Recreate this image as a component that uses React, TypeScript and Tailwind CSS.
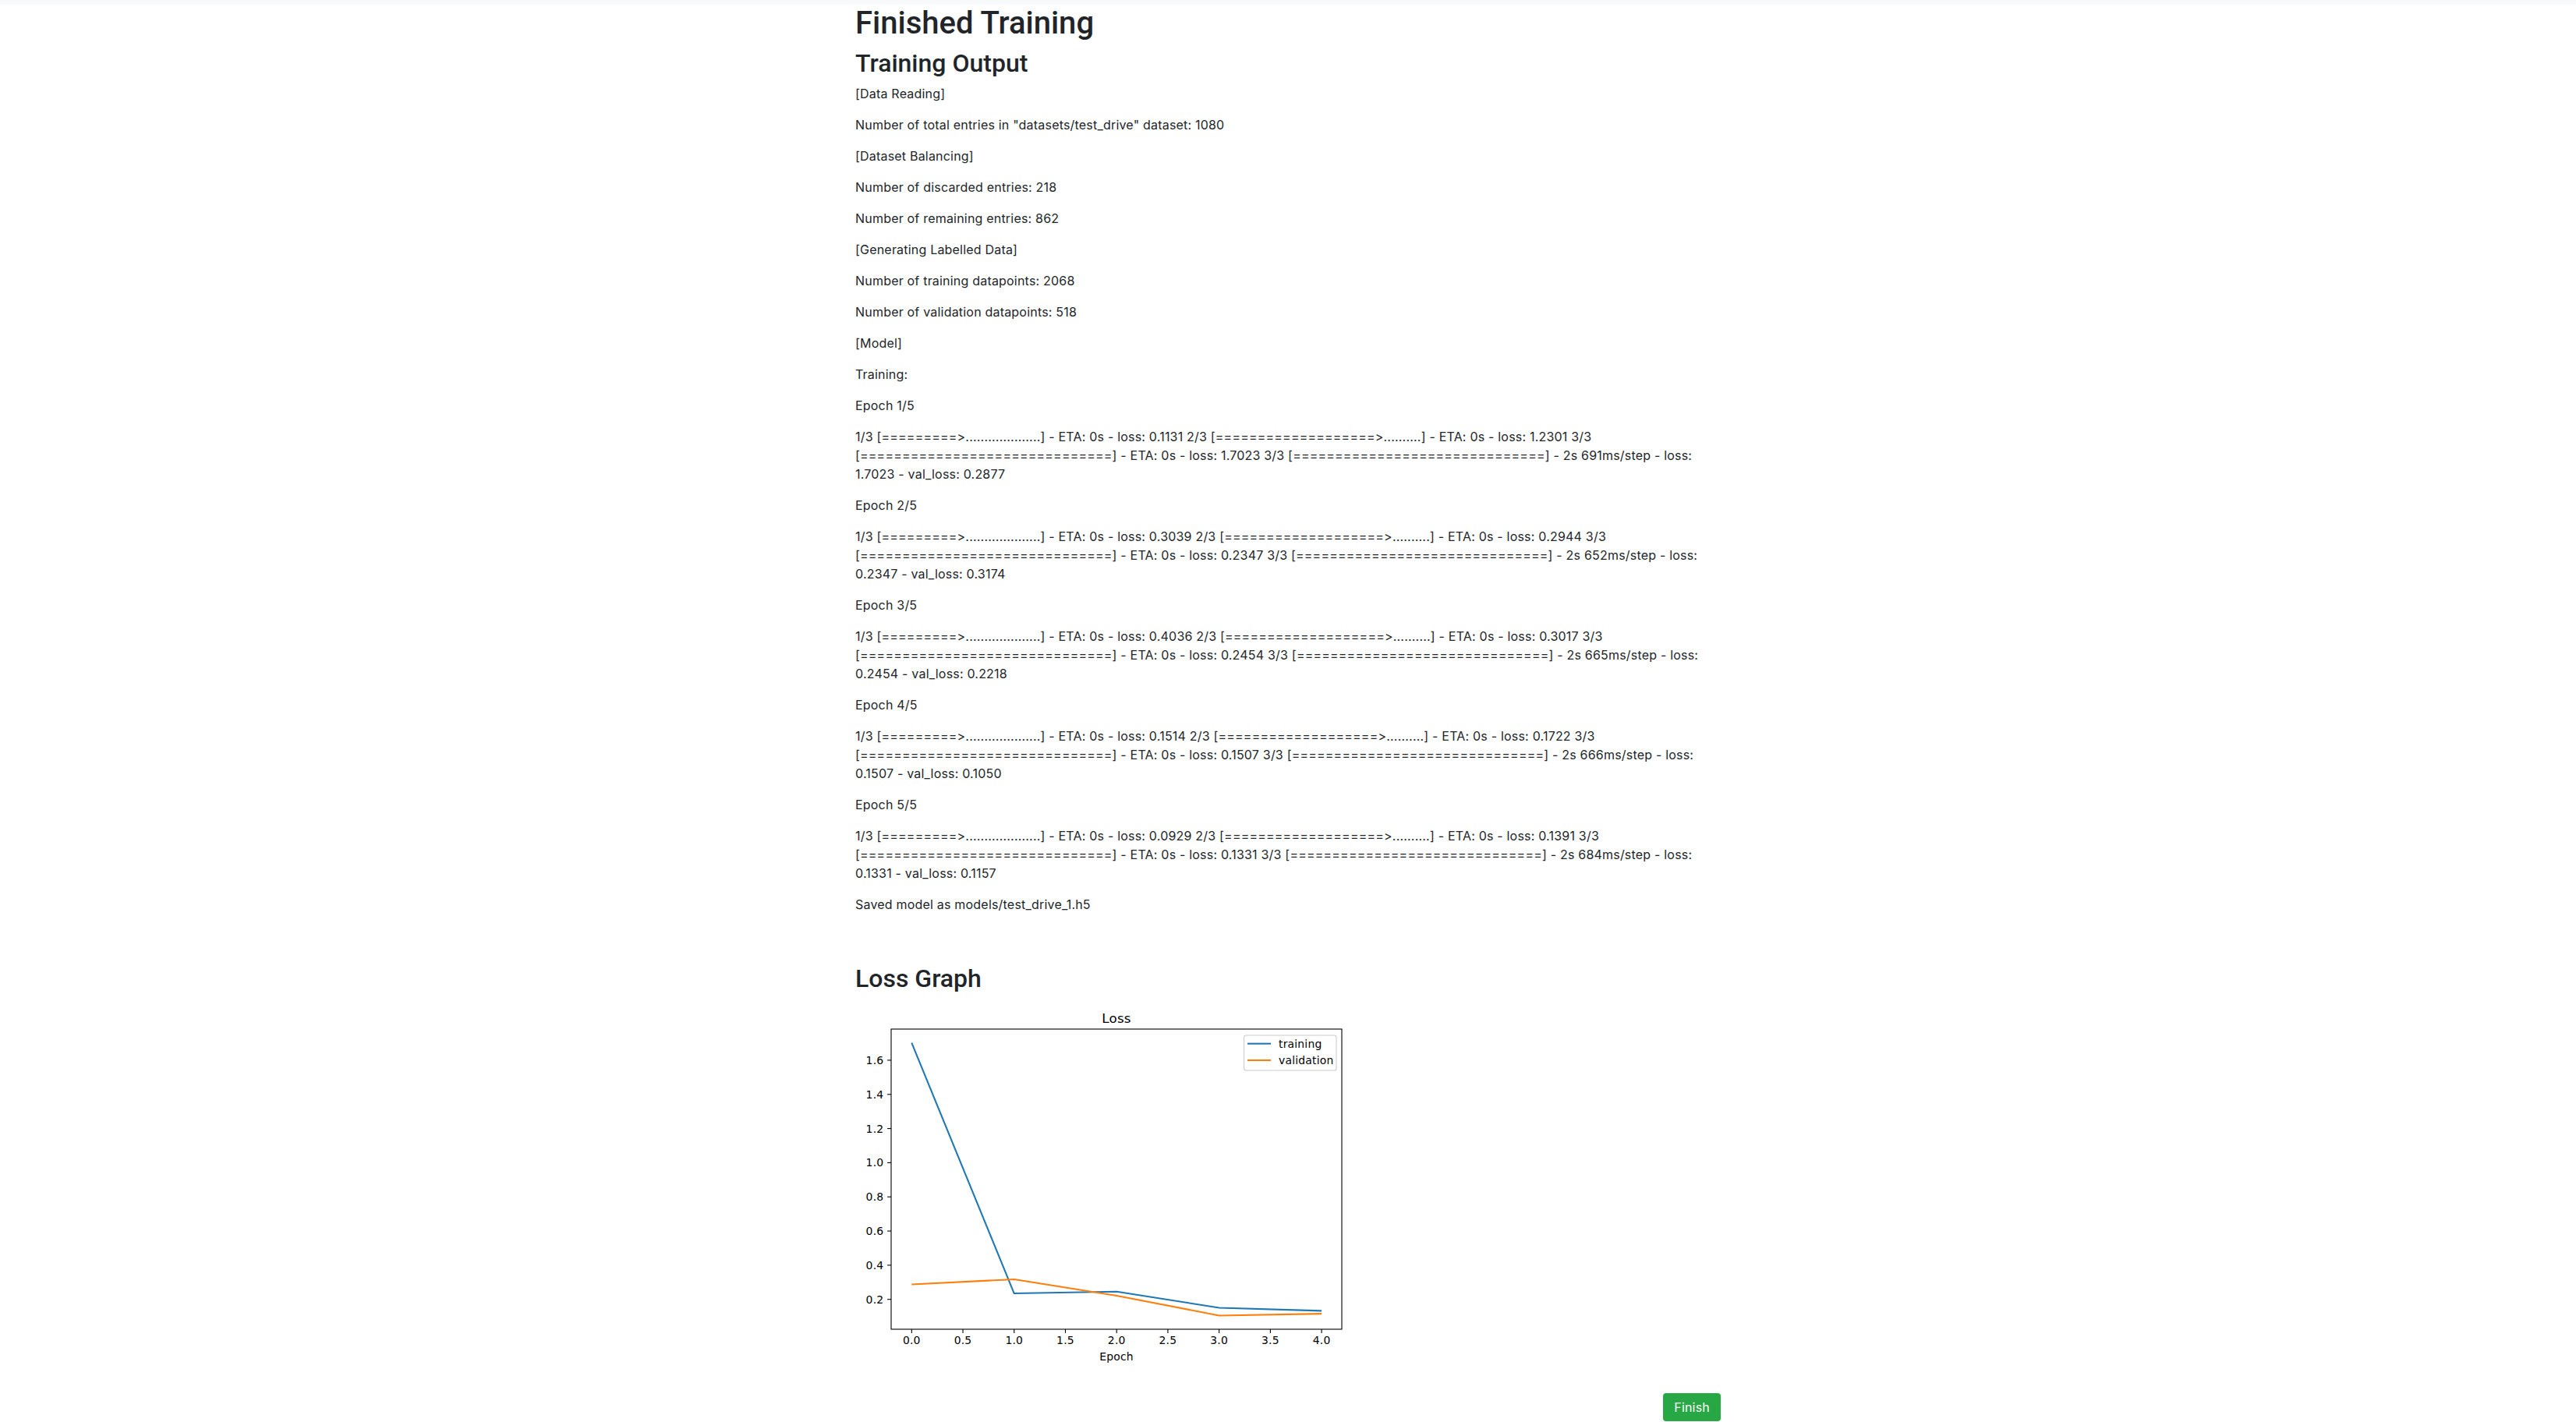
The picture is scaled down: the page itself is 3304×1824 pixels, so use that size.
const body = { fontFamily: 'Inter, "Liberation Sans", Arial, sans-serif' };
const head = { fontFamily: 'Roboto, "Liberation Sans", Arial, sans-serif' };

const half = "[=========>....................]";
const twoThirds = "[===================>..........]";
const full = "[==============================]";

type Epoch = { l1: string; l2: string; l3: string; ms: string; loss: string; val: string };

const epochs: Epoch[] = [
  { l1: "0.1131", l2: "1.2301", l3: "1.7023", ms: "691", loss: "1.7023", val: "0.2877" },
  { l1: "0.3039", l2: "0.2944", l3: "0.2347", ms: "652", loss: "0.2347", val: "0.3174" },
  { l1: "0.4036", l2: "0.3017", l3: "0.2454", ms: "665", loss: "0.2454", val: "0.2218" },
  { l1: "0.1514", l2: "0.1722", l3: "0.1507", ms: "666", loss: "0.1507", val: "0.1050" },
  { l1: "0.0929", l2: "0.1391", l3: "0.1331", ms: "684", loss: "0.1331", val: "0.1157" },
];

const intro = [
  "[Data Reading]",
  'Number of total entries in "datasets/test_drive" dataset: 1080',
  "[Dataset Balancing]",
  "Number of discarded entries: 218",
  "Number of remaining entries: 862",
  "[Generating Labelled Data]",
  "Number of training datapoints: 2068",
  "Number of validation datapoints: 518",
  "[Model]",
  "Training:",
];

// chart geometry (svg px)
const ax = { l: 46, r: 624, t: 37, b: 422 };
const ex = (e: number) => 72.3 + e * 131.45;
const vy = (v: number) => ax.b - (v - 0.02513) * 219.1;
const training = [1.7023, 0.2347, 0.2454, 0.1507, 0.1331];
const validation = [0.2877, 0.3174, 0.2218, 0.105, 0.1157];
const pts = (d: number[]) => d.map((v, i) => `${ex(i)},${vy(v)}`).join(" ");

function LossChart() {
  const yt = [0.2, 0.4, 0.6, 0.8, 1.0, 1.2, 1.4, 1.6];
  const xt = [0, 0.5, 1, 1.5, 2, 2.5, 3, 3.5, 4];
  return (
    <svg width="640" height="480" className="block" style={{ fontFamily: '"DejaVu Sans", sans-serif' }}>
      <text x={(ax.l + ax.r) / 2} y="28.7" textAnchor="middle" fontSize="16.7" fill="#000">
        Loss
      </text>
      <polyline points={pts(training)} fill="none" stroke="#1f77b4" strokeWidth="2.08" strokeLinejoin="round" />
      <polyline points={pts(validation)} fill="none" stroke="#ff7f0e" strokeWidth="2.08" strokeLinejoin="round" />
      <rect x={ax.l} y={ax.t} width={ax.r - ax.l} height={ax.b - ax.t} fill="none" stroke="#000" strokeWidth="1.1" />
      {yt.map((v) => (
        <g key={v}>
          <line x1={ax.l - 4.9} x2={ax.l} y1={vy(v)} y2={vy(v)} stroke="#000" strokeWidth="1.1" />
          <text x={ax.l - 9.7} y={vy(v) + 5} textAnchor="end" fontSize="13.9" fill="#000">
            {v.toFixed(1)}
          </text>
        </g>
      ))}
      {xt.map((e) => (
        <g key={e}>
          <line x1={ex(e)} x2={ex(e)} y1={ax.b} y2={ax.b + 4.9} stroke="#000" strokeWidth="1.1" />
          <text x={ex(e)} y="441" textAnchor="middle" fontSize="13.9" fill="#000">
            {e.toFixed(1)}
          </text>
        </g>
      ))}
      <text x={(ax.l + ax.r) / 2} y="462" textAnchor="middle" fontSize="13.9" fill="#000">
        Epoch
      </text>
      <rect x="498.6" y="45" width="118.4" height="45" rx="2.8" fill="#fff" fillOpacity="0.8" stroke="#cccccc" strokeWidth="1.1" />
      <line x1="503" x2="533" y1="55.7" y2="55.7" stroke="#1f77b4" strokeWidth="2.08" />
      <text x="543" y="60.5" fontSize="13.9" fill="#000">training</text>
      <line x1="503" x2="533" y1="77" y2="77" stroke="#ff7f0e" strokeWidth="2.08" />
      <text x="543" y="82" fontSize="13.9" fill="#000">validation</text>
    </svg>
  );
}

export default function App() {
  return (
    <div className="min-h-screen bg-white text-[#212529] [font-variant-ligatures:none]" style={body}>
      <div className="h-[6px] bg-[#f8f9fa]" />
      <div className="mx-auto flex w-[1140px] flex-col px-[15px] tracking-[0.2px]">
        <h1 className="mb-2 text-[40px] font-medium leading-[48px] tracking-normal" style={head}>
          Finished Training
        </h1>
        <h2 className="mb-2 text-[32px] font-medium leading-[38.4px] tracking-normal" style={head}>
          Training Output
        </h2>
        {intro.map((t) => (
          <p key={t} className="mb-4 text-base leading-6">
            {t}
          </p>
        ))}
        {epochs.map((e, i) => (
          <div key={i} className="flex flex-col">
            <p className="mb-4 text-base leading-6">Epoch {i + 1}/5</p>
            <p className="mb-4 text-base leading-6">
              <span className="block whitespace-nowrap">
                1/3 {half} - ETA: 0s - loss: {e.l1} 2/3 {twoThirds} - ETA: 0s - loss: {e.l2} 3/3
              </span>
              <span className="block whitespace-nowrap">
                {full} - ETA: 0s - loss: {e.l3} 3/3 {full} - 2s {e.ms}ms/step - loss:
              </span>
              <span className="block whitespace-nowrap">
                {e.loss} - val_loss: {e.val}
              </span>
            </p>
          </div>
        ))}
        <p className="mb-4 text-base leading-6">Saved model as models/test_drive_1.h5</p>
        <h2 className="mb-2 mt-12 text-[32px] font-medium leading-[38.4px] tracking-normal" style={head}>
          Loss Graph
        </h2>
        <LossChart />
        <div className="mt-6 flex justify-end">
          <button className="rounded-[4px] bg-[#28a745] px-[14px] py-1.5 text-base leading-6 text-white">Finish</button>
        </div>
      </div>
    </div>
  );
}
